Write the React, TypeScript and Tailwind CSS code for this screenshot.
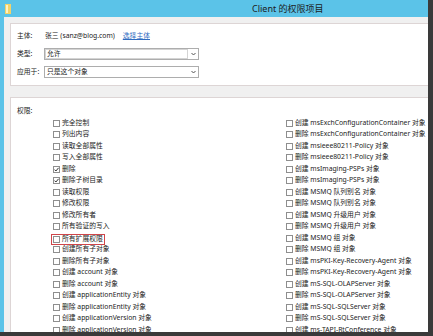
const leftItems: { label: string; checked?: boolean; marked?: boolean }[] = [
  { label: "完全控制" },
  { label: "列出内容" },
  { label: "读取全部属性" },
  { label: "写入全部属性" },
  { label: "删除", checked: true },
  { label: "删除子树目录", checked: true },
  { label: "读取权限" },
  { label: "修改权限" },
  { label: "修改所有者" },
  { label: "所有验证的写入" },
  { label: "所有扩展权限", marked: true },
  { label: "创建所有子对象" },
  { label: "删除所有子对象" },
  { label: "创建 account 对象" },
  { label: "删除 account 对象" },
  { label: "创建 applicationEntity 对象" },
  { label: "删除 applicationEntity 对象" },
  { label: "创建 applicationVersion 对象" },
  { label: "删除 applicationVersion 对象" },
];

const rightItems: string[] = [
  "创建 msExchConfigurationContainer 对象",
  "删除 msExchConfigurationContainer 对象",
  "创建 msieee80211-Policy 对象",
  "删除 msieee80211-Policy 对象",
  "创建 msImaging-PSPs 对象",
  "删除 msImaging-PSPs 对象",
  "创建 MSMQ 队列别名 对象",
  "删除 MSMQ 队列别名 对象",
  "创建 MSMQ 升级用户 对象",
  "删除 MSMQ 升级用户 对象",
  "创建 MSMQ 组 对象",
  "删除 MSMQ 组 对象",
  "创建 msPKI-Key-Recovery-Agent 对象",
  "删除 msPKI-Key-Recovery-Agent 对象",
  "创建 mS-SQL-OLAPServer 对象",
  "删除 mS-SQL-OLAPServer 对象",
  "创建 mS-SQL-SQLServer 对象",
  "删除 mS-SQL-SQLServer 对象",
  "创建 ms-TAPI-RtConference 对象",
];

function CheckBox({ checked }: { checked?: boolean }) {
  return (
    <span className="w-[7px] h-[7px] border border-[#8e8e8e] bg-white flex items-center justify-center shrink-0">
      {checked && (
        <svg width="5" height="5" viewBox="0 0 5 5">
          <polyline points="0.5,2.6 1.9,4 4.6,0.8" fill="none" stroke="#333" strokeWidth="1" />
        </svg>
      )}
    </span>
  );
}

function CheckRow({ label, checked, marked }: { label: string; checked?: boolean; marked?: boolean }) {
  return (
    <div className="h-[11.5px] flex items-center">
      <div className={`flex items-center gap-[2px] ${marked ? "outline outline-1 outline-[#d0464a] outline-offset-[1px] translate-y-[1px]" : ""}`}>
        <CheckBox checked={checked} />
        <span className="whitespace-nowrap">{label}</span>
      </div>
    </div>
  );
}

function Chevron() {
  return (
    <svg width="5" height="4" viewBox="0 0 5 4">
      <polyline points="0.5,1 2.5,3 4.5,1" fill="none" stroke="#555" strokeWidth="1" />
    </svg>
  );
}

export default function App() {
  return (
    <div
      className="w-[433px] h-[336px] overflow-hidden bg-[#3a3a3a] text-[6.8px] leading-none text-[#222]"
      style={{ fontFamily: '"Noto Sans", "Noto Sans CJK SC", sans-serif' }}
    >
      <div className="w-[428px] h-[332px] flex flex-col bg-[#5bc3e8] overflow-hidden">
        {/* 标题栏 */}
        <div className="h-[17px] shrink-0 flex items-center relative">
          <svg className="absolute left-[5px] top-[4px]" width="6" height="10" viewBox="0 0 6 10">
            <rect x="0" y="0" width="6" height="10" fill="#f3d36b" />
            <rect x="1" y="1" width="2" height="8" fill="#fff3c2" />
          </svg>
          <span className="pl-[252px] text-[9px] text-[#1c1c1c] whitespace-nowrap">Client 的权限项目</span>
        </div>

        {/* 内容区 */}
        <div className="flex-1 ml-[4px] bg-[#f0f0f0] flex flex-col overflow-hidden">
          <div className="mt-[6px] ml-[6px] -mr-[10px] h-[63px] shrink-0 border border-[#ddd5d5] bg-white pt-[6px] pl-[6px] flex flex-col gap-[6px]">
            <div className="h-[12px] flex items-center">
              <span className="w-[27px]">主体:</span>
              <span className="ml-[1px]">张三 (sanz@blog.com)</span>
              <span className="ml-[8px] text-[#2f6bbf] underline">选择主体</span>
            </div>
            <div className="h-[12px] flex items-center">
              <span className="w-[27px]">类型:</span>
              <div className="w-[155px] h-[12px] border border-[#adadad] bg-white flex">
                <div className="flex-1 border border-[#d4d4d4] flex items-center pl-[1px]">允许</div>
                <div className="w-[10px] flex items-center justify-center">
                  <Chevron />
                </div>
              </div>
            </div>
            <div className="h-[12px] flex items-center">
              <span className="w-[27px]">应用于:</span>
              <div className="w-[155px] h-[12px] border border-[#adadad] bg-white flex items-center">
                <span className="flex-1 pl-[2px]">只是这个对象</span>
                <div className="w-[10px] flex items-center justify-center">
                  <Chevron />
                </div>
              </div>
            </div>
          </div>

          <div className="mt-[11px] ml-[6px] -mr-[10px] flex-1 border border-[#ddd5d5] bg-white pt-[8px] pl-[6px]">
            <div className="h-[11.5px] flex items-center">权限:</div>
            <div className="flex pl-[36px]">
              <div className="w-[233px] flex flex-col">
                {leftItems.map((it) => (
                  <CheckRow key={it.label} label={it.label} checked={it.checked} marked={it.marked} />
                ))}
              </div>
              <div className="flex flex-col">
                {rightItems.map((t) => (
                  <CheckRow key={t} label={t} />
                ))}
              </div>
            </div>
          </div>
        </div>
      </div>
    </div>
  );
}
